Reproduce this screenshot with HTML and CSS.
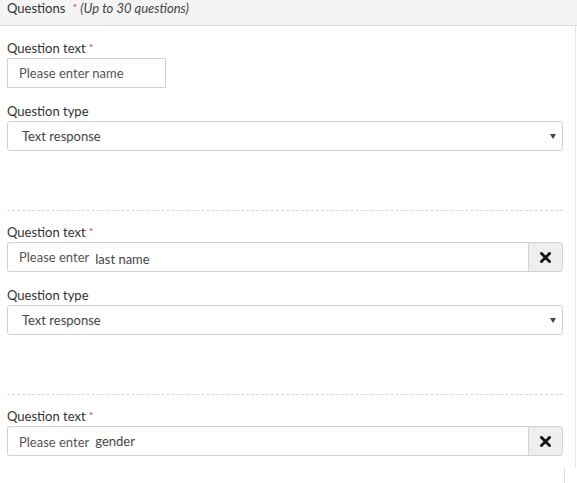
FILE: index.html
```html
<!DOCTYPE html>
<html>
<head>
<meta charset="utf-8">
<link rel="stylesheet" href="styles.css">
</head>
<body>
<div class="header">Questions <span class="req hreq">*</span> <em class="hint">(Up to 30 questions)</em></div>
<div class="content">
  <div class="question first">
    <div class="label">Question text <span class="req">*</span></div>
    <div class="field short"><span class="ph">Please enter name</span></div>
    <div class="label gap">Question type</div>
    <div class="select"><span>Text response</span><i class="caret"></i></div>
  </div>
  <div class="question">
    <div class="label">Question text <span class="req">*</span></div>
    <div class="group">
      <div class="field grow"><span class="ph">Please enter</span><span class="val">last name</span></div>
      <div class="btn"><svg width="11" height="11" viewBox="0 0 11 11"><path d="M1.5 1.5L9.5 9.5M9.5 1.5L1.5 9.5" stroke="#111" stroke-width="2.8" stroke-linecap="square"/></svg></div>
    </div>
    <div class="label gap">Question type</div>
    <div class="select"><span>Text response</span><i class="caret"></i></div>
  </div>
  <div class="question last">
    <div class="label">Question text <span class="req">*</span></div>
    <div class="group">
      <div class="field grow"><span class="ph">Please enter</span><span class="val wide">gender</span></div>
      <div class="btn"><svg width="11" height="11" viewBox="0 0 11 11"><path d="M1.5 1.5L9.5 9.5M9.5 1.5L1.5 9.5" stroke="#111" stroke-width="2.8" stroke-linecap="square"/></svg></div>
    </div>
  </div>
</div>
<div class="foot"></div>
</body>
</html>
```
FILE: styles.css
```css
html, body {
  margin: 0;
  padding: 0;
  background: #fff;
}
body {
  font-family: Lato, "Open Sans", sans-serif;
  font-size: 13px;
  color: #333;
  width: 577px;
  overflow: hidden;
}
.header {
  height: 25px;
  line-height: 14px;
  padding-left: 7px;
  background: #f4f4f4;
  border-bottom: 1px solid #dedede;
  color: #333;
}
.req {
  color: #e02020;
  font-size: 10px;
  vertical-align: 2px;
}
.hreq {
  margin-left: 4px;
}
.hint {
  color: #444;
  font-size: 13px;
}
.content {
  width: 556px;
  padding: 0 12px 0 7px;
  border-right: 1px solid #e6e6e6;
}
.question {
  padding-top: 11px;
  padding-bottom: 59px;
  border-bottom: 1px dashed #d8d8d8;
}
.question.first {
  padding-top: 12px;
}
.question.last {
  border-bottom: none;
  padding-bottom: 12px;
}
.label {
  line-height: 18px;
  margin-bottom: 1px;
  color: #333;
}
.label.gap {
  margin-top: 14px;
}
.field {
  box-sizing: border-box;
  height: 30px;
  line-height: 28px;
  border: 1px solid #d2d2d2;
  padding-left: 11px;
  color: #555;
  background: #fff;
}
.field.short {
  width: 159px;
}
.group {
  display: flex;
  height: 30px;
}
.field.grow {
  flex: 1;
  border-radius: 3px 0 0 3px;
  border-right: none;
}
.val {
  color: #444;
  margin-left: 6px;
  vertical-align: -2px;
}
.val.wide {
  margin-left: 6px;
  vertical-align: 1px;
}
.btn {
  box-sizing: border-box;
  width: 35px;
  height: 30px;
  background: #eeeeee;
  border: 1px solid #d2d2d2;
  border-radius: 0 3px 3px 0;
  display: flex;
  align-items: center;
  justify-content: center;
}
.select {
  box-sizing: border-box;
  height: 30px;
  border: 1px solid #d2d2d2;
  border-radius: 3px;
  padding-left: 14px;
  padding-right: 6px;
  display: flex;
  align-items: center;
  justify-content: space-between;
  color: #444;
}
.caret {
  width: 0;
  height: 0;
  border-left: 3px solid transparent;
  border-right: 3px solid transparent;
  border-top: 5px solid #444;
}
.foot {
  width: 564px;
  height: 16px;
  border-right: 1px solid #dddddd;
}
```
